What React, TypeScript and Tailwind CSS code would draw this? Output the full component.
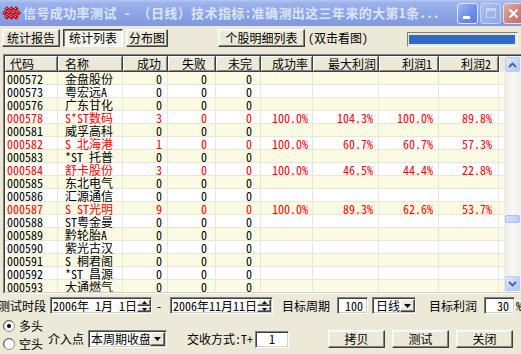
import React from 'react';

const FONT = "font-['Noto_Sans_Mono_CJK_SC','Noto_Sans_CJK_SC',sans-serif]";

type Row = {
  c: string;
  n: string;
  s: string;
  r?: string;
  m?: string;
  p1?: string;
  p2?: string;
  red?: boolean;
};

const rows: Row[] = [
  { c: '000572', n: '金盘股份', s: '0' },
  { c: '000573', n: '粤宏远A', s: '0' },
  { c: '000576', n: '广东甘化', s: '0' },
  { c: '000578', n: 'S*ST数码', s: '3', r: '100.0%', m: '104.3%', p1: '100.0%', p2: '89.8%', red: true },
  { c: '000581', n: '威孚高科', s: '0' },
  { c: '000582', n: 'S 北海港', s: '1', r: '100.0%', m: '60.7%', p1: '60.7%', p2: '57.3%', red: true },
  { c: '000583', n: '*ST 托普', s: '0' },
  { c: '000584', n: '舒卡股份', s: '3', r: '100.0%', m: '46.5%', p1: '44.4%', p2: '22.8%', red: true },
  { c: '000585', n: '东北电气', s: '0' },
  { c: '000586', n: '汇源通信', s: '0' },
  { c: '000587', n: 'S ST光明', s: '9', r: '100.0%', m: '89.3%', p1: '62.6%', p2: '53.7%', red: true },
  { c: '000588', n: 'ST粤金曼', s: '0' },
  { c: '000589', n: '黔轮胎A', s: '0' },
  { c: '000590', n: '紫光古汉', s: '0' },
  { c: '000591', n: 'S 桐君阁', s: '0' },
  { c: '000592', n: '*ST 昌源', s: '0' },
  { c: '000593', n: '大通燃气', s: '0' },
];

const cols = [
  { title: '代码', w: 'w-[53px]', h: 'justify-start pl-[5px]', d: 'justify-start pl-[2px]' },
  { title: '名称', w: 'w-[65px]', h: 'justify-start pl-[7px]', d: 'justify-start pl-[7px]' },
  { title: '成功', w: 'w-[45px]', h: 'justify-end pr-[6px]', d: 'justify-end pr-[6px]' },
  { title: '失败', w: 'w-[48px]', h: 'justify-end pr-[9px]', d: 'justify-end pr-[9px]' },
  { title: '未完', w: 'w-[45px]', h: 'justify-end pr-[8px]', d: 'justify-end pr-[9px]' },
  { title: '成功率', w: 'w-[52px]', h: 'justify-end pr-[4px]', d: 'justify-end pr-[5px]' },
  { title: '最大利润', w: 'w-[66px]', h: 'justify-end pr-[2px]', d: 'justify-end pr-[6px]' },
  { title: '利润1', w: 'w-[60px]', h: 'justify-end pr-[6px]', d: 'justify-end pr-[6px]' },
  { title: '利润2', w: 'w-[60px]', h: 'justify-end pr-[7px]', d: 'justify-end pr-[7px]' },
];

const RAISED =
  'border border-t-white border-l-white border-r-[#404040] border-b-[#404040] shadow-[inset_-1px_-1px_0_#808080,inset_1px_1px_0_#f4f3ec] bg-[#ECE9D8]';
const SUNKEN =
  'border border-t-[#808080] border-l-[#808080] border-r-white border-b-white shadow-[inset_1px_1px_0_#404040,inset_-1px_-1px_0_#d4d0c8] bg-white';

const diamonds: [number, number][] = [
  [5, 3],
  [9.5, 3],
  [14, 3],
  [2.75, 7],
  [7.25, 7],
  [11.75, 7],
  [16.25, 7],
  [5, 11],
  [9.5, 11],
  [14, 11],
];

function TitleBar() {
  return (
    <div className="h-[26px] flex items-center bg-[linear-gradient(to_bottom,#b3c5f3_0%,#9cb2eb_12%,#8ca4e4_55%,#8199dd_100%)]">
      <svg className="ml-[2px] shrink-0" width="19" height="14" viewBox="0 0 19 14">
        {diamonds.map(([x, y], i) => (
          <g key={i}>
            <polygon
              points={`${x},${y - 2.4} ${x + 2.4},${y} ${x},${y + 2.4} ${x - 2.4},${y}`}
              fill="#e40000"
              stroke="#8a0000"
              strokeWidth="0.4"
            />
            <rect x={x - 1} y={y - 1} width="1" height="1" fill="#ffb0b0" />
          </g>
        ))}
      </svg>
      <span className="ml-[2px] text-[13px] font-bold tracking-[0.4px] text-[#dbe4f8] whitespace-nowrap leading-[18px]">
        信号成功率测试 - （日线）技术指标:准确测出这三年来的大第1条...
      </span>
      <div className="ml-auto mr-[-3px] flex gap-[2px] shrink-0">
        <div className="w-[21px] h-[21px] rounded-[3px] border border-[#e2e9fb] bg-[linear-gradient(135deg,#a4b9f2,#6a8ce6_60%,#5b7fe0)] flex items-end pl-[5px] pb-[4px]">
          <div className="w-[7px] h-[3px] bg-white" />
        </div>
        <div className="w-[21px] h-[21px] rounded-[3px] border border-[#c7d4f6] bg-[linear-gradient(135deg,#aabef2,#90a8e8)] flex items-center justify-center">
          <div className="w-[10px] h-[10px] border border-[#c8d5f7] border-t-[3px]" />
        </div>
        <div className="w-[21px] h-[21px] rounded-[3px] border border-[#f1dcd9] bg-[linear-gradient(135deg,#e3aaa4,#cd7f79_60%,#c27069)] flex items-center justify-center">
          <svg width="11" height="11" viewBox="0 0 11 11">
            <path d="M1.5 1.5 L9.5 9.5 M9.5 1.5 L1.5 9.5" stroke="#fff" strokeWidth="2" />
          </svg>
        </div>
      </div>
    </div>
  );
}

function Toolbar() {
  return (
    <div className="h-[26px] flex items-start pt-[3px]">
      <div className={`ml-[2px] w-[58px] h-[18px] flex items-center justify-center ${RAISED}`}>统计报告</div>
      <div className="ml-[3px] w-[60px] h-[18px] flex items-center justify-center border border-t-[#404040] border-l-[#404040] border-r-white border-b-white shadow-[inset_1px_1px_0_#808080] bg-[#f6f5ef]">
        统计列表
      </div>
      <div className={`ml-[3px] w-[42px] h-[18px] flex items-center justify-center ${RAISED}`}>分布图</div>
      <div className={`ml-[50px] w-[87px] h-[18px] flex items-center justify-center ${RAISED}`}>个股明细列表</div>
      <span className="ml-[3px] leading-[18px] whitespace-nowrap">(双击看图)</span>
      <div className="ml-auto mr-[3px] mt-[3px] w-[111px] h-[15px] border border-t-[#808080] border-l-[#808080] border-r-white border-b-white bg-[#ECE9D8] pl-[1px] pr-[2px] py-[2px]">
        <div className="h-full bg-[#316AC5]" />
      </div>
    </div>
  );
}

function ScrollBtn({ up }: { up: boolean }) {
  return (
    <div className="mx-[1px] my-[1px] h-[15px] shrink-0 rounded-[2px] border border-[#b7caf5] bg-[linear-gradient(135deg,#e2eafe,#c3d4fc_55%,#b2c6f8)] flex items-center justify-center">
      <svg width="9" height="6" viewBox="0 0 9 6">
        <path
          d={up ? 'M1 5 L4.5 1.5 L8 5' : 'M1 1 L4.5 4.5 L8 1'}
          stroke="#4d6185"
          strokeWidth="1.8"
          fill="none"
        />
      </svg>
    </div>
  );
}

function Table() {
  return (
    <div className="mt-[2px] ml-[3px] w-[520px] h-[240px] border border-t-[#808080] border-l-[#808080] border-r-white border-b-white">
      <div className="w-full h-full flex border border-t-[#404040] border-l-[#404040] border-r-[#d4d0c8] border-b-[#d4d0c8]">
        <div className="w-[499px] h-full flex flex-col bg-white overflow-hidden">
          <div className="flex h-[16px] shrink-0 bg-[#ECE9D8]">
            {cols.map((c, i) => (
              <div
                key={i}
                className={`${c.w} ${c.h} shrink-0 h-[16px] flex items-center whitespace-nowrap border-r border-b border-r-[#404040] border-b-[#404040] shadow-[inset_1px_1px_0_#fff,inset_-1px_-1px_0_#808080] leading-[15px]`}
              >
                {c.title}
              </div>
            ))}
            <div className="w-[5px] shrink-0 h-[16px] shadow-[inset_1px_1px_0_#fff]" />
          </div>
          <div className="h-[220px] overflow-hidden">
            {rows.map((r, i) => {
              const vals = [r.c, r.n, r.s, '0', '0', r.r ?? '', r.m ?? '', r.p1 ?? '', r.p2 ?? ''];
              return (
                <div
                  key={i}
                  className={`flex h-[13px] ${i % 2 === 0 ? 'bg-[#FBFBE4]' : 'bg-white'} ${r.red ? 'text-[#ff0000]' : 'text-black'}`}
                >
                  {vals.map((v, j) => (
                    <div
                      key={j}
                      className={`${cols[j].w} ${cols[j].d} shrink-0 h-[13px] flex items-center whitespace-pre shadow-[inset_-1px_-1px_0_#E9E7DA] leading-[13px]`}
                    >
                      {v}
                    </div>
                  ))}
                  <div className="w-[5px] shrink-0 h-[13px] shadow-[inset_0_-1px_0_#E9E7DA]" />
                </div>
              );
            })}
          </div>
        </div>
        <div className="w-[17px] h-full shrink-0 flex flex-col bg-[linear-gradient(to_right,#ecebe4,#f8f8f4_50%,#f1f0ea)]">
          <ScrollBtn up={true} />
          <div className="flex-1 flex flex-col">
            <div className="mt-[142px] mx-[1px] h-[8px] rounded-[2px] border border-[#a9bdf2] bg-[linear-gradient(to_right,#d2defd,#bccefa)]" />
          </div>
          <ScrollBtn up={false} />
        </div>
      </div>
    </div>
  );
}

function Spinner() {
  return (
    <div className="ml-auto w-[14px] h-full shrink-0 flex flex-col">
      <div className={`h-[7px] flex items-center justify-center ${RAISED}`}>
        <svg width="5" height="3" viewBox="0 0 5 3">
          <path d="M0 3 L2.5 0 L5 3 Z" fill="#000" />
        </svg>
      </div>
      <div className={`flex-1 flex items-center justify-center ${RAISED}`}>
        <svg width="5" height="3" viewBox="0 0 5 3">
          <path d="M0 0 L2.5 3 L5 0 Z" fill="#000" />
        </svg>
      </div>
    </div>
  );
}

function DropBtn() {
  return (
    <div className={`ml-auto w-[15px] h-full shrink-0 flex items-center justify-center ${RAISED}`}>
      <svg width="7" height="4" viewBox="0 0 7 4">
        <path d="M0 0 L7 0 L3.5 4 Z" fill="#000" />
      </svg>
    </div>
  );
}

function Radio({ checked }: { checked: boolean }) {
  return (
    <svg width="12" height="12" viewBox="0 0 12 12" className="shrink-0">
      <circle cx="6" cy="6" r="5.5" fill="#fff" stroke="#8e8e8e" />
      <path d="M2.2 9.8 A5 5 0 0 1 9.8 2.2" stroke="#4a4a4a" strokeWidth="0.8" fill="none" />
      {checked && <circle cx="6" cy="6" r="2" fill="#000" />}
    </svg>
  );
}

function BottomRow1() {
  return (
    <div className="mt-[3px] h-[17px] flex items-center whitespace-nowrap">
      <span className="ml-[-2px] w-[48px] shrink-0">测试时段</span>
      <div className={`ml-[4px] w-[102px] h-[17px] shrink-0 flex items-center pl-[2px] pr-[1px] py-[1px] ${SUNKEN}`}>
        <span className="whitespace-pre">2006年 1月 1日</span>
        <Spinner />
      </div>
      <span className="ml-[4px] shrink-0">-</span>
      <div className={`ml-[8px] w-[103px] h-[17px] shrink-0 flex items-center pl-[2px] pr-[1px] py-[1px] ${SUNKEN}`}>
        <span className="whitespace-pre">2006年11月11日</span>
        <Spinner />
      </div>
      <span className="ml-[9px] shrink-0">目标周期</span>
      <div className={`ml-[7px] w-[31px] h-[17px] shrink-0 flex items-center justify-end pr-[4px] ${SUNKEN}`}>100</div>
      <div className={`ml-[4px] w-[44px] h-[17px] shrink-0 flex items-center pl-[3px] pr-[1px] py-[1px] ${SUNKEN}`}>
        <span>日线</span>
        <DropBtn />
      </div>
      <span className="ml-[13px] shrink-0">目标利润</span>
      <div className={`ml-[7px] w-[31px] h-[17px] shrink-0 flex items-center justify-end pr-[5px] ${SUNKEN}`}>30</div>
      <span className="ml-[1px] shrink-0">%</span>
    </div>
  );
}

function BottomRow2() {
  return (
    <div className="mt-[3px] flex items-start whitespace-nowrap">
      <div className="ml-[3px] w-[45px] shrink-0 flex flex-col">
        <div className="h-[18px] flex items-center gap-[4px]">
          <Radio checked={true} />
          <span>多头</span>
        </div>
        <div className="h-[18px] flex items-center gap-[4px]">
          <Radio checked={false} />
          <span>空头</span>
        </div>
      </div>
      <div className="mt-[13px] h-[18px] flex items-center">
        <span className="shrink-0">介入点</span>
        <div className={`ml-[4px] w-[79px] h-[18px] shrink-0 flex items-center pl-[2px] pr-[1px] py-[1px] ${SUNKEN}`}>
          <span className="overflow-hidden whitespace-nowrap min-w-0">本周期收盘价</span>
          <DropBtn />
        </div>
        <span className="ml-[20px] shrink-0">交收方式:T+</span>
        <div className={`ml-[2px] w-[34px] h-[17px] shrink-0 flex items-center justify-center ${SUNKEN}`}>1</div>
        <div className={`ml-[39px] w-[57px] h-[18px] shrink-0 flex items-center justify-center ${RAISED}`}>拷贝</div>
        <div className={`ml-[7px] w-[57px] h-[18px] shrink-0 flex items-center justify-center ${RAISED}`}>测试</div>
        <div className={`ml-[7px] w-[57px] h-[18px] shrink-0 flex items-center justify-center ${RAISED}`}>关闭</div>
      </div>
    </div>
  );
}

export default function App() {
  return (
    <div className={`w-[521px] h-[354px] overflow-hidden bg-[#ECE9D8] text-black text-[12px] leading-[14px] ${FONT}`}>
      <TitleBar />
      <Toolbar />
      <Table />
      <BottomRow1 />
      <BottomRow2 />
    </div>
  );
}
